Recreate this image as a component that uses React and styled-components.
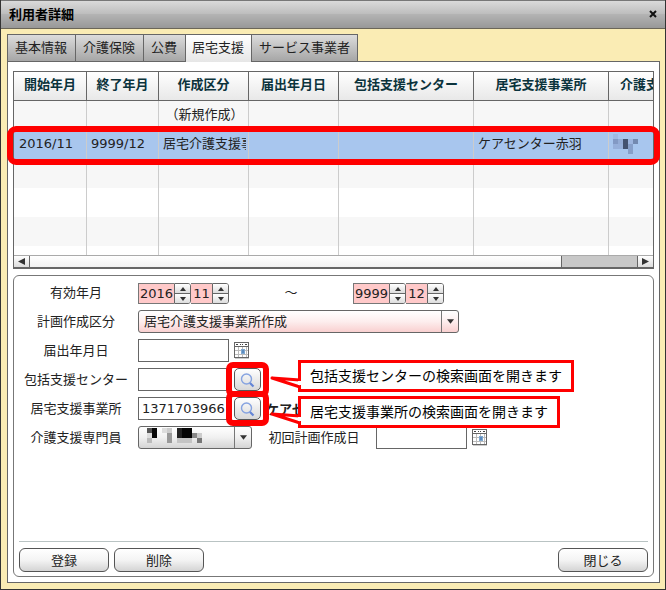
import React, { useState } from 'react';
import styled, { createGlobalStyle } from 'styled-components';

const tabs = ['基本情報', '介護保険', '公費', '居宅支援', 'サービス事業者'];

const columns = [
  { name: '開始年月', width: 73 },
  { name: '終了年月', width: 72 },
  { name: '作成区分', width: 90 },
  { name: '届出年月日', width: 90 },
  { name: '包括支援センター', width: 135 },
  { name: '居宅支援事業所', width: 135 },
  { name: '介護支援専門員', width: 114 },
];

const rows = [
  ['', '', '（新規作成）', '', '', '', ''],
  ['2016/11', '9999/12', '居宅介護支援事業所作成', '', '', 'ケアセンター赤羽', <RowMosaic />],
  ['', '', '', '', '', '', ''],
  ['', '', '', '', '', '', ''],
  ['', '', '', '', '', '', ''],
  ['', '', '', '', '', '', ''],
];

function RowMosaic() {
  return (
    <svg width='26' height='20' viewBox='0 0 26 20' shapeRendering='crispEdges'>
      <rect x='0' y='0' width='5' height='5' fill='#a0b9e2' />
      <rect x='0' y='5' width='5' height='5' fill='#8299c4' />
      <rect x='5' y='5' width='5' height='5' fill='#94acd6' />
      <rect x='10' y='5' width='5' height='10' fill='#435270' />
      <rect x='15' y='5' width='5' height='5' fill='#9db5df' />
      <rect x='20' y='5' width='5' height='5' fill='#7389b0' />
      <rect x='0' y='10' width='10' height='5' fill='#96afda' />
      <rect x='15' y='10' width='5' height='10' fill='#879fc9' />
    </svg>
  );
}

function SelectMosaic() {
  return (
    <svg width='60' height='15' viewBox='0 0 60 15' shapeRendering='crispEdges'>
      <rect x='0' y='0' width='5' height='5' fill='#555' />
      <rect x='5' y='0' width='5' height='10' fill='#080808' />
      <rect x='0' y='5' width='5' height='5' fill='#ddd' />
      <rect x='0' y='10' width='5' height='5' fill='#bbb' />
      <rect x='15' y='0' width='5' height='5' fill='#ddd' />
      <rect x='20' y='0' width='5' height='5' fill='#ccc' />
      <rect x='20' y='5' width='5' height='10' fill='#999' />
      <rect x='30' y='0' width='5' height='10' fill='#222' />
      <rect x='35' y='0' width='10' height='10' fill='#050505' />
      <rect x='30' y='10' width='15' height='5' fill='#c4c4c4' />
      <rect x='45' y='5' width='5' height='5' fill='#888' />
      <rect x='50' y='5' width='5' height='5' fill='#ccc' />
      <rect x='50' y='10' width='5' height='5' fill='#777' />
    </svg>
  );
}

function CalendarIcon() {
  return (
    <svg width='16' height='17' viewBox='0 0 16 17' shapeRendering='crispEdges'>
      <rect x='0.5' y='0.5' width='14' height='15' fill='#fff' stroke='#666' />
      <path d='M1 4.5H14' stroke='#666' />
      <path d='M2 2.5H4M6 2.5H7M8 2.5H9M11 2.5H13' stroke='#444' />
      <path d='M1 8.5H14M1 12.5H14M4.5 5V15M8.5 5V15M12.5 5V15' stroke='#bbb' />
      <rect x='7' y='7' width='4' height='5' fill='#7fa8d0' />
      <rect x='8' y='8' width='2' height='3' fill='#5b8cc0' />
      <path d='M1 16.5H15' stroke='#ccc' />
    </svg>
  );
}

function SearchIcon() {
  return (
    <svg width='16' height='16' viewBox='0 0 16 16' fill='none'>
      <circle cx='6.5' cy='7' r='5' stroke='#86a3e0' strokeWidth='1.4' />
      <path d='M10 11L13.5 14.5' stroke='#6485d6' strokeWidth='2.2' />
    </svg>
  );
}

function Arrow({ dir, size = 7 }) {
  const paths = {
    up: 'M0 5L3 1L6 5Z',
    down: 'M0 1L3 5L6 1Z',
    left: 'M6 0L0 3L6 6Z',
    right: 'M0 0L6 3L0 6Z',
  };
  return (
    <svg width={size} height={size} viewBox='0 0 6 6'>
      <path d={paths[dir]} fill='#333' />
    </svg>
  );
}

function Spinner({ value, label, wide }) {
  return (
    <>
      <SpinInput type='text' defaultValue={value} aria-label={label} $wide={wide} />
      <Stepper>
        <button type='button' aria-label={`${label} +`}>
          <Arrow dir='up' size={6} />
        </button>
        <button type='button' aria-label={`${label} -`}>
          <Arrow dir='down' size={6} />
        </button>
      </Stepper>
    </>
  );
}

function Search({ label, note, raised }) {
  return (
    <SearchSpot>
      <SearchButton type='button' aria-label={label}>
        <SearchIcon />
      </SearchButton>
      <Ring />
      <Callout $raised={raised}>
        {note}
        <svg width='34' height='32' viewBox='0 0 34 32'>
          <path
            d='M33 20L5 18L33 27'
            fill='#fff'
            stroke='#f00'
            strokeWidth='3'
            strokeLinejoin='round'
          />
          <rect x='31' y='21' width='3' height='4' fill='#fff' />
        </svg>
      </Callout>
    </SearchSpot>
  );
}

export default function App() {
  const [tab, setTab] = useState('居宅支援');
  return (
    <>
      <GlobalStyle />
      <Window>
        <TitleBar>
          <h1>利用者詳細</h1>
          <button type='button' aria-label='閉じる'>
            <svg width='8' height='8' viewBox='0 0 8 8'>
              <path d='M1 1L7 7M7 1L1 7' stroke='#111' strokeWidth='2' />
            </svg>
          </button>
        </TitleBar>
        <Body>
          <Tabs>
            {tabs.map((name) => (
              <Tab key={name} type='button' $active={name === tab} onClick={() => setTab(name)}>
                {name}
              </Tab>
            ))}
          </Tabs>
          <Panel>
            <Grid>
              <Viewport>
                <Table>
                  <colgroup>
                    {columns.map(({ name, width }) => (
                      <col key={name} style={{ width }} />
                    ))}
                  </colgroup>
                  <thead>
                    <tr>
                      {columns.map(({ name }) => (
                        <th key={name}>{name}</th>
                      ))}
                    </tr>
                  </thead>
                  <tbody>
                    {rows.map((row, index) => (
                      <Row key={index} $selected={index === 1} $centered={index === 0}>
                        {row.map((cell, i) => (
                          <td key={i}>
                            <div>{cell}</div>
                          </td>
                        ))}
                      </Row>
                    ))}
                  </tbody>
                </Table>
              </Viewport>
              <ScrollBar>
                <button type='button' aria-label='左へ'>
                  <Arrow dir='left' />
                </button>
                <span />
                <i />
                <button type='button' aria-label='右へ'>
                  <Arrow dir='right' />
                </button>
              </ScrollBar>
              <RowRing />
            </Grid>
            <Form onSubmit={(e) => e.preventDefault()}>
              <Fields>
                <Field $bottom>
                  <Label as='span'>有効年月</Label>
                  <Spinner value='2016' label='開始年' wide />
                  <Spinner value='11' label='開始月' />
                  <Label as='span'>～</Label>
                  <Spinner value='9999' label='終了年' wide />
                  <Spinner value='12' label='終了月' />
                </Field>
                <Field>
                  <Label htmlFor='plan'>計画作成区分</Label>
                  <SelectBox $wide>
                    <select id='plan'>
                      <option>居宅介護支援事業所作成</option>
                    </select>
                    <span>
                      <Arrow dir='down' />
                    </span>
                  </SelectBox>
                </Field>
                <Field>
                  <Label htmlFor='notified'>届出年月日</Label>
                  <TextInput id='notified' type='text' />
                  <IconButton type='button' aria-label='届出年月日を選択'>
                    <CalendarIcon />
                  </IconButton>
                </Field>
                <Field>
                  <Label htmlFor='center'>包括支援センター</Label>
                  <TextInput id='center' type='text' />
                  <Search
                    label='包括支援センター検索'
                    note='包括支援センターの検索画面を開きます'
                    raised
                  />
                </Field>
                <Field>
                  <Label htmlFor='office'>居宅支援事業所</Label>
                  <TextInput id='office' type='text' defaultValue='1371703966' />
                  <Search
                    label='居宅支援事業所検索'
                    note='居宅支援事業所の検索画面を開きます'
                  />
                  <OfficeName>ケアセンター赤羽</OfficeName>
                </Field>
                <Field>
                  <Label htmlFor='manager'>介護支援専門員</Label>
                  <SelectBox>
                    <SelectMosaic />
                    <select id='manager' />
                    <span>
                      <Arrow dir='down' />
                    </span>
                  </SelectBox>
                  <Label htmlFor='first'>初回計画作成日</Label>
                  <TextInput id='first' type='text' />
                  <IconButton type='button' aria-label='初回計画作成日を選択'>
                    <CalendarIcon />
                  </IconButton>
                </Field>
              </Fields>
              <Actions>
                <Button type='submit'>登録</Button>
                <Button type='button'>削除</Button>
                <Button type='button' $last>
                  閉じる
                </Button>
              </Actions>
            </Form>
          </Panel>
        </Body>
      </Window>
    </>
  );
}

const GlobalStyle = createGlobalStyle`
  * {
    box-sizing: border-box;
  }
  body {
    margin: 0;
  }
  body, button, input, select {
    font-family: 'DejaVu Sans', 'Noto Sans CJK JP', sans-serif;
    font-size: 13px;
    color: #222;
  }
  button {
    padding: 0;
    cursor: pointer;
  }
  svg {
    display: block;
    flex-shrink: 0;
  }
`;

const Window = styled.main`
  display: flex;
  flex-direction: column;
  min-height: 100vh;
  background: #faecb4;
  border: 1px solid #333;
  border-top: 0;
`;

const TitleBar = styled.header`
  display: flex;
  align-items: center;
  justify-content: space-between;
  height: 29px;
  padding: 0 8px;
  border-top: 1px solid #777;
  border-bottom: 1px solid #6b6658;
  background: linear-gradient(#dadada, #bdbdbd 48%, #b3b3b3 50%, #989898);
  h1 {
    margin: 0;
    font-size: 13px;
    line-height: 20px;
    color: #000;
  }
  button {
    padding-bottom: 2px;
    border: 0;
    background: none;
  }
`;

const Body = styled.div`
  display: flex;
  flex-direction: column;
  flex: 1;
  padding: 5px 5px 6px 6px;
`;

const Tabs = styled.nav`
  display: flex;
`;

const Tab = styled.button`
  height: 27px;
  padding: 0 8px 4px 7px;
  border: 1px solid #666;
  border-width: 1px 0 0 1px;
  background: linear-gradient(#dcdcdc, #a6a6a6);
  white-space: nowrap;
  &:last-child {
    padding-right: 7px;
    border-right-width: 1px;
  }
  ${({ $active }) =>
    $active &&
    `
    margin-bottom: -1px;
    padding: 0 7px 4px 6px;
    height: 28px;
    z-index: 1;
    background: linear-gradient(#fff, #e6e6e6);
  `}
`;

const Panel = styled.section`
  display: flex;
  flex-direction: column;
  flex: 1;
  gap: 6px;
  padding: 9px 5px 5px;
  border: 1px solid #666;
  background: #fff;
`;

const Grid = styled.div`
  position: relative;
  border: 1px solid #666;
  border-bottom-width: 2px;
`;

const Viewport = styled.div`
  height: 183px;
  overflow: hidden;
`;

const Table = styled.table`
  table-layout: fixed;
  width: 709px;
  border-collapse: separate;
  border-spacing: 0;
  th {
    height: 29px;
    padding: 0 0 5px;
    border-right: 1px solid #666;
    border-bottom: 1px solid #666;
    background: linear-gradient(#fff, #e8e8e8);
    color: #0b333c;
    white-space: nowrap;
  }
`;

const Row = styled.tr`
  background: ${({ $selected }) => ($selected ? '#a8c6ee' : '#fff')};
  &:nth-child(odd) {
    background: #f7f7f7;
  }
  td {
    height: 29px;
    padding: 0 2px 2px 5px;
    border-right: 1px solid #ccc;
    text-align: ${({ $centered }) => ($centered ? 'center' : 'left')};
  }
  td + td {
    padding-left: 4px;
  }
  div {
    line-height: 20px;
    overflow: hidden;
    white-space: nowrap;
  }
`;

const ScrollBar = styled.div`
  display: flex;
  height: 12px;
  border-top: 1px solid #aaa;
  background: linear-gradient(#fff, #f1f1f1);
  button {
    display: flex;
    align-items: center;
    justify-content: center;
    width: 16px;
    border: 0 solid #666;
    background: linear-gradient(#fff, #ddd);
  }
  button:first-child {
    border-right-width: 1px;
  }
  button:last-child {
    border-left-width: 1px;
  }
  span {
    flex: 1;
  }
  i {
    width: 76px;
    border-left: 1px solid #666;
    background: #c8c8c8;
  }
`;

const RowRing = styled.div`
  position: absolute;
  top: 54px;
  left: -7px;
  right: -7px;
  height: 39px;
  border: 6px solid #f00;
  border-radius: 9px;
  pointer-events: none;
`;

const Form = styled.form`
  display: flex;
  flex-direction: column;
  flex: 1;
  justify-content: space-between;
  padding: 5px 5px 4px 0;
  border: 1px solid #777;
  border-radius: 6px;
`;

const Fields = styled.div`
  display: flex;
  flex-direction: column;
  gap: 6px;
`;

const Field = styled.div`
  display: flex;
  align-items: ${({ $bottom }) => ($bottom ? 'flex-end' : 'center')};
  height: 23px;
`;

const Label = styled.label`
  width: 124px;
  line-height: 23px;
  text-align: center;
  white-space: nowrap;
`;

const TextInput = styled.input`
  width: 91px;
  height: 23px;
  margin-right: 5px;
  padding: 0 3px;
  border: 1px solid #666;
  background: #fff;
`;

const SpinInput = styled.input`
  width: ${({ $wide }) => ($wide ? '36px' : '22px')};
  height: 21px;
  padding: 0 1px;
  border: 1px solid #777;
  border-right: 0;
  background: #ffc9c9;
  text-align: center;
`;

const Stepper = styled.div`
  display: flex;
  flex-direction: column;
  width: 17px;
  height: 21px;
  border: 1px solid #666;
  border-radius: 0 3px 3px 0;
  overflow: hidden;
  & + input {
    border-left: 0;
    width: 21px;
  }
  button {
    display: flex;
    flex: 1;
    align-items: center;
    justify-content: center;
    border: 0;
    background: linear-gradient(#fff, #ddd);
  }
  button + button {
    border-top: 1px solid #666;
  }
`;

const SelectBox = styled.div`
  display: flex;
  width: ${({ $wide }) => ($wide ? '321px' : '114px')};
  height: 23px;
  border: 1px solid #666;
  border-radius: 3px;
  background: ${({ $wide }) =>
    $wide
      ? 'linear-gradient(#fff, #fdeeee 50%, #f9d0d0)'
      : 'linear-gradient(#fff, #f0f0f0 50%, #d4d4d4)'};
  > svg {
    margin: 1px 0 0 8px;
  }
  select {
    flex: 1;
    min-width: 0;
    padding: 0 5px;
    border: 0;
    background: none;
    appearance: none;
  }
  span {
    display: flex;
    align-items: center;
    justify-content: center;
    width: 17px;
    border-left: 1px solid #777;
  }
`;

const IconButton = styled.button`
  border: 0;
  background: none;
`;

const SearchSpot = styled.div`
  position: relative;
`;

const SearchButton = styled.button`
  display: flex;
  align-items: center;
  justify-content: center;
  width: 27px;
  height: 23px;
  border: 1px solid #555;
  border-radius: 5px;
  background: linear-gradient(#fff, #d8d8d8);
`;

const Ring = styled.div`
  position: absolute;
  inset: -6px -8px;
  border: 6px solid #f00;
  border-radius: 7px;
  pointer-events: none;
`;

const Callout = styled.div`
  position: absolute;
  z-index: 2;
  top: ${({ $raised }) => ($raised ? '-8px' : '-1px')};
  left: 64px;
  padding: 0 9px;
  border: 3px solid #f00;
  background: #fff;
  color: #000;
  font-size: 14px;
  line-height: 26px;
  white-space: nowrap;
  svg {
    position: absolute;
    top: -3px;
    left: -34px;
  }
`;

const OfficeName = styled.strong`
  margin-left: 5px;
`;

const Actions = styled.footer`
  display: flex;
  gap: 5px;
  margin-left: 5px;
  padding-top: 6px;
  border-top: 1px solid #b9c3c3;
`;

const Button = styled.button`
  width: 90px;
  height: 24px;
  padding-bottom: 2px;
  margin-left: ${({ $last }) => ($last ? 'auto' : '0')};
  border: 1px solid #555;
  border-radius: 6px;
  background: linear-gradient(#fff, #f4f4f4 50%, #d4d4d4);
`;
